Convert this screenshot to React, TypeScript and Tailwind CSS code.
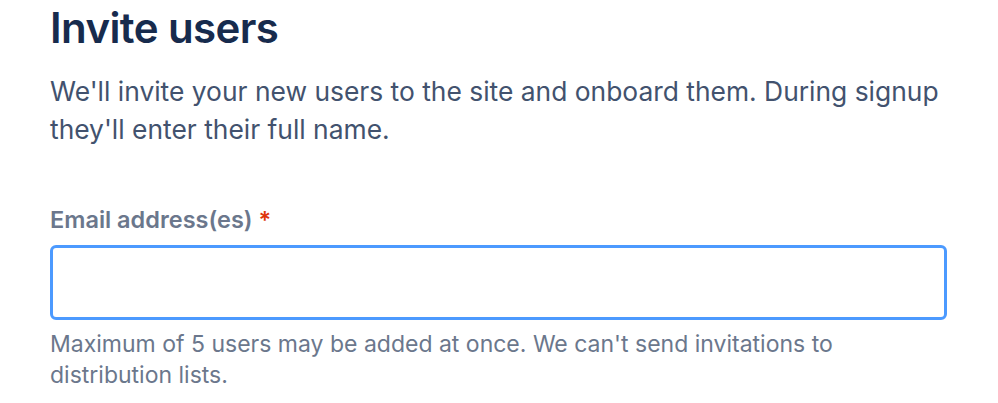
export default function App() {
  return (
    <div className="w-[998px] h-[403px] bg-white overflow-hidden pl-[50px] pr-[51px]" style={{ fontFamily: "Inter, 'Noto Sans', sans-serif" }}>
      <h1 className="text-[42px] leading-[56px] font-semibold text-[#172B4D] tracking-[-0.6px]">Invite users</h1>
      <p className="mt-[16px] text-[26.4px] leading-[38px] text-[#42526E]">
        We'll invite your new users to the site and onboard them. During signup they'll enter their full name.
      </p>
      <label className="block mt-[56px] text-[23.5px] leading-[32px] font-semibold text-[#6B778C]">
        Email address(es) <span className="text-[#DE350B]">*</span>
      </label>
      <input className="block mt-[9px] w-full h-[75px] rounded-[6px] border-[3px] border-[#4C9AFF] outline-none px-4 text-[26px] text-[#172B4D]" />
      <p className="mt-[9px] text-[23px] leading-[31px] text-[#6B778C] pr-[100px]">
        Maximum of 5 users may be added at once. We can't send invitations to distribution lists.
      </p>
    </div>
  );
}
